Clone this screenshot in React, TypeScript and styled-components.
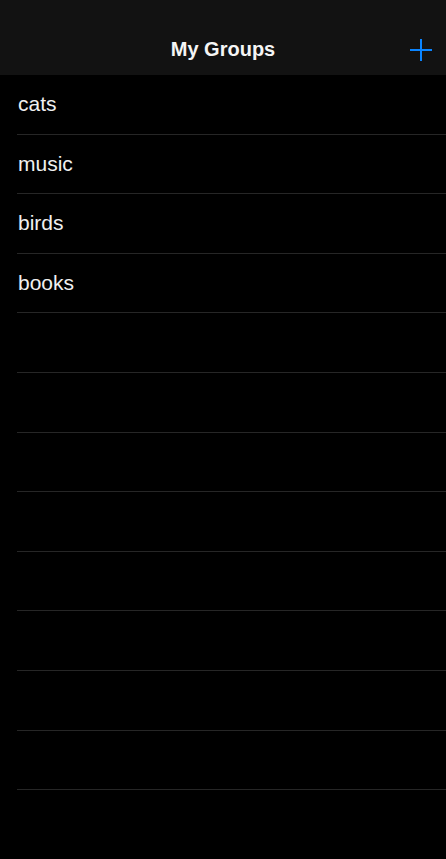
import styled, { createGlobalStyle } from "styled-components";

const groups = ["cats", "music", "birds", "books"];
const EMPTY_ROWS = 8;

function PlusIcon() {
  return (
    <svg width="24" height="24" viewBox="0 0 24 24" fill="none">
      <path d="M12 1v22M1 12h22" stroke="#0a84ff" strokeWidth="2" />
    </svg>
  );
}

function App() {
  const rows = [...groups, ...Array(EMPTY_ROWS).fill("")];
  return (
    <>
      <GlobalStyle />
      <Screen>
        <Header>
          <span />
          <Title>My Groups</Title>
          <AddButton aria-label="Add group">
            <PlusIcon />
          </AddButton>
        </Header>
        <List>
          {rows.map((name, index) => (
            <Row key={index}>
              <RowLabel>{name}</RowLabel>
            </Row>
          ))}
        </List>
      </Screen>
    </>
  );
}

const GlobalStyle = createGlobalStyle`
  html, body {
    margin: 0;
    padding: 0;
    background: #000;
  }
  body {
    font-family: "Liberation Sans", Arial, sans-serif;
  }
`;

const Screen = styled.div`
  width: 446px;
  height: 859px;
  background: #000;
  overflow: hidden;
  display: flex;
  flex-direction: column;
`;

const Header = styled.div`
  height: 75px;
  flex-shrink: 0;
  box-sizing: border-box;
  padding: 24px 13px 0 13px;
  background: #121212;
  display: grid;
  grid-template-columns: 1fr auto 1fr;
  align-items: center;
`;

const Title = styled.h1`
  margin: 0;
  font-size: 20px;
  font-weight: bold;
  color: #f5f5f5;
`;

const AddButton = styled.button`
  justify-self: end;
  padding: 0;
  border: none;
  background: none;
  display: flex;
  cursor: pointer;
`;

const List = styled.div`
  display: flex;
  flex-direction: column;
  padding-left: 17px;
`;

const Row = styled.div`
  height: 59.6px;
  box-sizing: border-box;
  border-bottom: 1.5px solid #262626;
  display: flex;
  align-items: center;
`;

const RowLabel = styled.span`
  font-size: 21px;
  color: #f0f0f0;
  padding-left: 1px;
`;

export default App;
